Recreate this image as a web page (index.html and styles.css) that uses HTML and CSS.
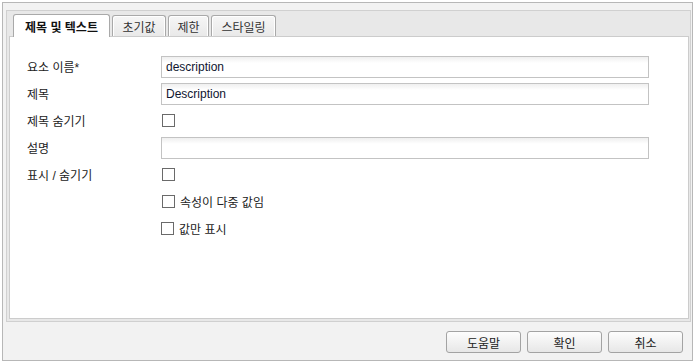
FILE: index.html
```html
<!DOCTYPE html>
<html lang="ko">
<head>
<meta charset="utf-8">
<title>속성</title>
<link rel="stylesheet" href="styles.css">
</head>
<body>
<div class="frame">
  <div class="tabpanel">
    <div class="tabs">
      <div class="tab active t1">제목 및 텍스트</div>
      <div class="tab t2">초기값</div>
      <div class="tab t3">제한</div>
      <div class="tab t4">스타일링</div>
    </div>
    <div class="content">
      <div class="row">
        <label class="lbl">요소 이름*</label>
        <div class="field"><div class="input">description</div></div>
      </div>
      <div class="row">
        <label class="lbl">제목</label>
        <div class="field"><div class="input">Description</div></div>
      </div>
      <div class="row">
        <label class="lbl">제목 숨기기</label>
        <div class="field"><span class="check"></span></div>
      </div>
      <div class="row">
        <label class="lbl">설명</label>
        <div class="field"><div class="input"></div></div>
      </div>
      <div class="row">
        <label class="lbl">표시 / 숨기기</label>
        <div class="field"><span class="check"></span></div>
      </div>
      <div class="row">
        <span class="lbl"></span>
        <div class="field"><span class="check"></span><span class="ctext">속성이 다중 값임</span></div>
      </div>
      <div class="row">
        <span class="lbl"></span>
        <div class="field shift"><span class="check"></span><span class="ctext">값만 표시</span></div>
      </div>
    </div>
  </div>
  <div class="buttons">
    <button class="btn">도움말</button>
    <button class="btn">확인</button>
    <button class="btn">취소</button>
  </div>
</div>
</body>
</html>
```

FILE: styles.css
```css
html, body {
  margin: 0;
  padding: 0;
  background: #ffffff;
}
body {
  font-family: "Liberation Sans", "Noto Sans CJK KR", sans-serif;
  font-size: 12px;
  color: #222222;
}
.frame {
  margin: 2px 0 0 2px;
  width: 691px;
  height: 359px;
  box-sizing: border-box;
  border: 1px solid #b7b7b7;
  background: #f2f2f2;
  padding: 7px 1px 0 3px;
  display: flex;
  flex-direction: column;
}
.tabpanel {
  height: 312px;
  box-sizing: border-box;
  border: 1px solid #d0d0d0;
  background: #e8e8e8;
  padding: 0 1px 2px 2px;
  display: flex;
  flex-direction: column;
}
.tabs {
  height: 25px;
  display: flex;
  align-items: flex-end;
  gap: 2px;
  padding-left: 4px;
  position: relative;
  z-index: 1;
}
.tab {
  height: 21px;
  box-sizing: border-box;
  border: 1px solid #a9a9a9;
  border-bottom: none;
  border-radius: 3px 3px 0 0;
  background: linear-gradient(#f6f6f6, #e9e9e9);
  box-shadow: inset 1px 1px 0 #ffffff, inset -1px 0 0 #ffffff;
  display: flex;
  align-items: center;
  justify-content: center;
  color: #333333;
  font-size: 12px;
  padding-top: 1px;
}
.tab.active {
  height: 23px;
  margin-bottom: -1px;
  background: #ffffff;
  font-weight: bold;
  color: #111111;
  box-shadow: none;
  padding-top: 0;
}
.t1 { width: 97px; }
.t2 { width: 54px; }
.t3 { width: 41px; }
.t4 { width: 65px; }
.content {
  flex: 1;
  border: 1px solid #cccccc;
  background: #ffffff;
  padding: 16px 0 0 17px;
}
.row {
  height: 27px;
  display: flex;
  align-items: center;
}
.lbl {
  width: 134px;
  flex: none;
  color: #222222;
}
.field {
  display: flex;
  align-items: center;
}
.field.shift {
  margin-left: -1px;
}
.input {
  width: 488px;
  height: 22px;
  box-sizing: border-box;
  border: 1px solid #c3c3c3;
  background: linear-gradient(#efefef, #ffffff 6px);
  padding: 0 4px;
  line-height: 20px;
  font-size: 12px;
  color: #0f1630;
}
.check {
  width: 13px;
  height: 13px;
  box-sizing: border-box;
  border: 1px solid #6a6a6a;
  background: #ffffff;
  display: inline-block;
  margin-left: 1px;
}
.ctext {
  margin-left: 5px;
  color: #222222;
}
.buttons {
  flex: 1;
  display: flex;
  justify-content: flex-end;
  align-items: flex-start;
  gap: 6px;
  padding: 9px 8px 0 0;
}
.btn {
  width: 75px;
  height: 22px;
  box-sizing: border-box;
  border: 1px solid #a3a3a3;
  border-radius: 3px;
  background: linear-gradient(#fdfdfd, #e7e7e7);
  font-family: "Liberation Sans", "Noto Sans CJK KR", sans-serif;
  font-size: 12px;
  color: #222222;
  padding: 0;
}
```
